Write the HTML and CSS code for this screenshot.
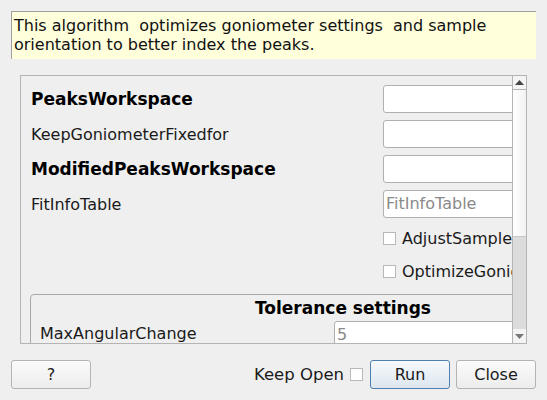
FILE: index.html
```html
<!DOCTYPE html>
<html>
<head>
<meta charset="utf-8">
<link rel="stylesheet" href="styles.css">
</head>
<body>
<div class="dialog">
  <div class="desc">This algorithm  optimizes goniometer settings  and sample orientation to better index the peaks.</div>
  <div class="scrollarea">
    <div class="viewport">
      <div class="content">
        <div class="row"><span class="label bold">PeaksWorkspace</span><span class="input"></span></div>
        <div class="row"><span class="label">KeepGoniometerFixedfor</span><span class="input"></span></div>
        <div class="row"><span class="label bold">ModifiedPeaksWorkspace</span><span class="input"></span></div>
        <div class="row"><span class="label">FitInfoTable</span><span class="input placeholder">FitInfoTable</span></div>
        <div class="checkrow first"><span class="cb"></span><span>AdjustSampleOffsets</span></div>
        <div class="checkrow"><span class="cb"></span><span>OptimizeGoniometerTilt</span></div>
        <div class="group">
          <div class="group-title">Tolerance settings</div>
          <div class="grow"><span class="glabel">MaxAngularChange</span><span class="input placeholder">5</span></div>
        </div>
      </div>
    </div>
    <div class="scrollbar">
      <div class="sb-btn up"><svg width="9" height="5" viewBox="0 0 9 5"><polygon points="0,5 9,5 4.5,0" fill="#444"/></svg></div>
      <div class="sb-handle"></div>
      <div class="sb-track"></div>
      <div class="sb-btn down"><svg width="9" height="5" viewBox="0 0 9 5"><polygon points="0,0 9,0 4.5,5" fill="#777"/></svg></div>
    </div>
  </div>
  <div class="buttons">
    <button class="btn">?</button>
    <div class="spacer"></div>
    <span class="keep">Keep Open</span>
    <span class="cb keep-cb"></span>
    <button class="btn run">Run</button>
    <button class="btn close">Close</button>
  </div>
</div>
</body>
</html>
```
FILE: styles.css
```css
html, body {
  margin: 0;
  padding: 0;
  background: #efefef;
}
body {
  font-family: "DejaVu Sans", sans-serif;
  font-size: 16px;
  color: #000;
  width: 547px;
  height: 400px;
  overflow: hidden;
}
.dialog {
  display: flex;
  flex-direction: column;
  padding: 11px 11px 0 11px;
}
.desc {
  height: 48px;
  box-sizing: border-box;
  background: #ffffdc;
  border-top: 1px solid #a0a0a0;
  border-left: 1px solid #a0a0a0;
  padding: 4px 3px 0 2px;
  line-height: 19px;
  white-space: pre-wrap;
  color: #111;
}
.scrollarea {
  margin-top: 16px;
  margin-left: 9px;
  width: 507px;
  height: 269px;
  box-sizing: border-box;
  border: 1px solid #b4b4b4;
  display: flex;
  overflow: hidden;
}
.viewport {
  width: 491px;
  height: 267px;
  overflow: hidden;
  flex: none;
}
.content {
  width: 700px;
  padding-top: 9px;
  padding-left: 10px;
  box-sizing: border-box;
}
.row {
  display: flex;
  align-items: center;
  height: 28px;
  margin-bottom: 7px;
}
.label {
  width: 352px;
  flex: none;
  color: #1a1a1a;
}
.bold {
  font-weight: bold;
  font-size: 17px;
  color: #000;
}
.input {
  display: block;
  box-sizing: border-box;
  width: 200px;
  height: 28px;
  background: #fff;
  border: 1px solid #b0b0b0;
  border-radius: 3px;
  color: #8a8a8a;
  line-height: 26px;
  padding-left: 2px;
}
.checkrow {
  display: flex;
  align-items: center;
  height: 26px;
  margin-left: 352px;
  margin-bottom: 7px;
  white-space: nowrap;
  color: #1a1a1a;
}
.checkrow.first {
  margin-top: 1px;
}
.cb {
  display: inline-block;
  width: 13px;
  height: 13px;
  box-sizing: border-box;
  background: #fff;
  border: 1px solid #b8b8b8;
  margin-right: 6px;
  flex: none;
}
.group {
  margin-top: 10px;
  margin-left: -1px;
  width: 626px;
  height: 80px;
  box-sizing: border-box;
  border: 1px solid #a8a8a8;
  border-radius: 4px;
  padding: 4px 0 0 0;
}
.group-title {
  font-weight: bold;
  font-size: 17px;
  text-align: center;
  line-height: 19px;
  height: 19px;
}
.grow {
  display: flex;
  align-items: center;
  margin-top: 3px;
  padding-left: 9px;
  height: 28px;
}
.glabel {
  width: 294px;
  flex: none;
  color: #1a1a1a;
  position: relative;
  top: -2px;
}
.scrollbar {
  width: 14px;
  height: 267px;
  box-sizing: border-box;
  border-left: 1px solid #b4b4b4;
  display: flex;
  flex-direction: column;
  flex: none;
  background: #fff;
}
.sb-btn {
  height: 14px;
  flex: none;
  display: flex;
  align-items: center;
  justify-content: center;
  background: #f4f4f4;
}
.sb-btn.up {
  border-bottom: 1px solid #b4b4b4;
  height: 13px;
}
.sb-handle {
  height: 147px;
  flex: none;
  background: linear-gradient(to right, #ffffff, #f2f2f2);
  border-bottom: 1px solid #c8c8c8;
  box-sizing: border-box;
}
.sb-track {
  flex: 1;
  background: #dcdcdc;
}
.buttons {
  display: flex;
  align-items: center;
  margin-top: 16px;
  height: 29px;
}
.spacer {
  flex: 1;
}
.btn {
  font-family: "DejaVu Sans", sans-serif;
  font-size: 16px;
  width: 80px;
  height: 29px;
  box-sizing: border-box;
  border: 1px solid #b4b4b4;
  border-radius: 3px;
  background: linear-gradient(to bottom, #fbfbfb, #ececec);
  color: #1a1a1a;
  padding: 0;
}
.keep {
  color: #1a1a1a;
  margin-right: 6px;
  font-size: 16.5px;
}
.keep-cb {
  margin-right: 7px;
}
.run {
  border-color: #4f7fae;
  background: linear-gradient(to bottom, #f6f9fc, #dde6ef);
  margin-right: 6px;
}
```
